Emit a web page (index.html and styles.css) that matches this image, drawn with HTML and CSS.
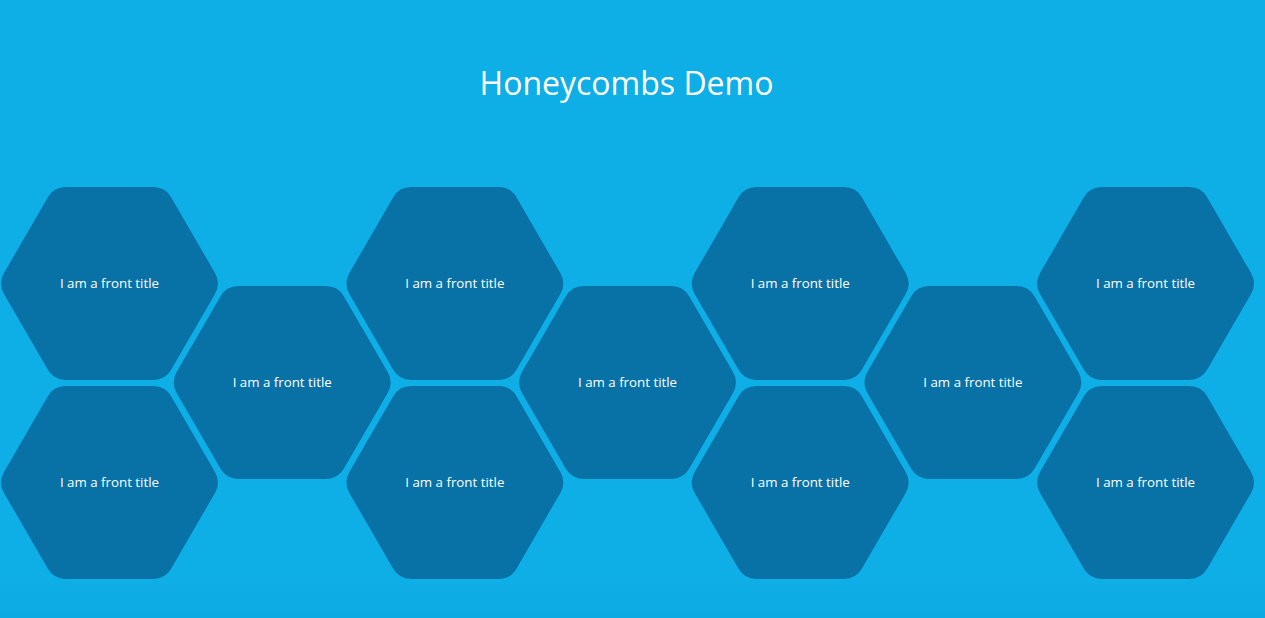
FILE: index.html
```html
<!DOCTYPE html>
<html lang="en">
<head>
    <meta charset="UTF-8">
    <meta name="viewport" content="width=device-width, initial-scale=1.0">
    <title>Honeycombs Demo</title>
    <link rel="stylesheet" href="styles.css">
</head>
<body>
    <div class="container">
        <h1>Honeycombs Demo</h1>

        <div class="honeycombs">
            <div class="column">
                <div class="comb"><span>I am a front title</span></div>
                <div class="comb"><span>I am a front title</span></div>
            </div>
            <div class="column">
                <div class="comb"><span>I am a front title</span></div>
            </div>
            <div class="column">
                <div class="comb"><span>I am a front title</span></div>
                <div class="comb"><span>I am a front title</span></div>
            </div>
            <div class="column">
                <div class="comb"><span>I am a front title</span></div>
            </div>
            <div class="column">
                <div class="comb"><span>I am a front title</span></div>
                <div class="comb"><span>I am a front title</span></div>
            </div>
            <div class="column">
                <div class="comb"><span>I am a front title</span></div>
            </div>
            <div class="column">
                <div class="comb"><span>I am a front title</span></div>
                <div class="comb"><span>I am a front title</span></div>
            </div>
        </div>
    </div>
</body>
</html>
```

FILE: styles.css
```css
* {
    margin: 0;
    padding: 0;
    box-sizing: border-box;
}

html, body {
    height: 100%;
}

body {
    font-family: 'Open Sans', 'Noto Sans', sans-serif;
    background: linear-gradient(to bottom, #0eaee6 0%, #0eaee6 94%, #0caae2 100%);
    color: white;
    overflow: hidden;
}

.container {
    width: 1253px;
}

h1 {
    text-align: center;
    font-weight: 400;
    font-size: 32px;
    line-height: 46px;
    padding-top: 60px;
    margin-bottom: 81px;
}

.honeycombs {
    display: flex;
    align-items: flex-start;
    padding-left: 0.5px;
}

.column {
    display: flex;
    flex-direction: column;
    gap: 6px;
    width: 218px;
    flex-shrink: 0;
}

.column + .column {
    margin-left: -45.33px;
}

.column:nth-child(even) {
    margin-top: 99px;
}

.comb {
    width: 218px;
    height: 193px;
    background: #0872a7;
    clip-path: path('M65.25,0 H152.75 Q164.75,0 170.75,10.39 L214.5,86.11 Q220.5,96.5 214.5,106.89 L170.75,182.61 Q164.75,193 152.75,193 H65.25 Q53.25,193 47.25,182.61 L3.5,106.89 Q-2.5,96.5 3.5,86.11 L47.25,10.39 Q53.25,0 65.25,0 Z');
    display: flex;
    align-items: center;
    justify-content: center;
    font-size: 13.3px;
    padding-bottom: 1px;
}
```
